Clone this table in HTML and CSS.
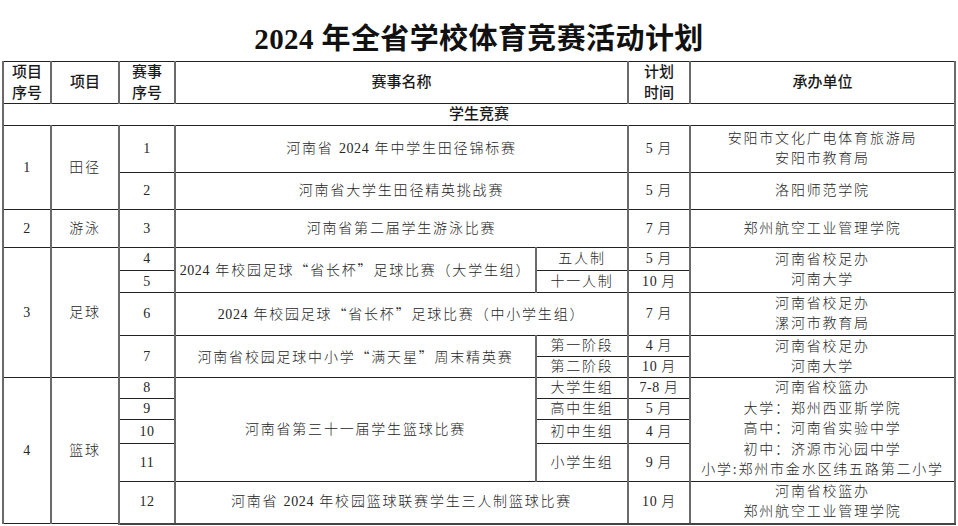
FILE: index.html
```html
<!DOCTYPE html>
<html lang="zh-CN">
<head>
<meta charset="utf-8">
<title>2024年全省学校体育竞赛活动计划</title>
<link rel="stylesheet" href="styles.css">
</head>
<body>
<h1 class="title">2024 年全省学校体育竞赛活动计划</h1>
<table class="plan">
  <colgroup>
    <col class="c1"><col class="c2"><col class="c3"><col class="c4a"><col class="c4b"><col class="c5"><col class="c6">
  </colgroup>
  <thead>
    <tr class="h-head">
      <th>项目<br>序号</th>
      <th>项目</th>
      <th>赛事<br>序号</th>
      <th colspan="2">赛事名称</th>
      <th>计划<br>时间</th>
      <th>承办单位</th>
    </tr>
  </thead>
  <tbody>
    <tr class="h-sec"><th colspan="7">学生竞赛</th></tr>
    <tr class="h-r1">
      <td rowspan="2" class="n">1</td><td rowspan="2">田径</td><td class="n">1</td>
      <td colspan="2">河南省 <span class="num">2024</span> 年中学生田径锦标赛</td><td class="n">5 月</td>
      <td>安阳市文化广电体育旅游局<br>安阳市教育局</td>
    </tr>
    <tr class="h-r2">
      <td class="n">2</td><td colspan="2">河南省大学生田径精英挑战赛</td><td class="n">5 月</td><td>洛阳师范学院</td>
    </tr>
    <tr class="h-r3">
      <td class="n">2</td><td>游泳</td><td class="n">3</td><td colspan="2">河南省第二届学生游泳比赛</td><td class="n">7 月</td><td>郑州航空工业管理学院</td>
    </tr>
    <tr class="h-r4">
      <td rowspan="5" class="n">3</td><td rowspan="5">足球</td><td class="n">4</td>
      <td rowspan="2"><span class="num">2024</span> 年校园足球<span class="q">“</span>省长杯<span class="q">”</span>足球比赛（大学生组）</td>
      <td>五人制</td><td class="n">5 月</td>
      <td rowspan="2">河南省校足办<br>河南大学</td>
    </tr>
    <tr class="h-r5"><td class="n">5</td><td>十一人制</td><td class="n">10 月</td></tr>
    <tr class="h-r6">
      <td class="n">6</td><td colspan="2"><span class="num">2024</span> 年校园足球<span class="q">“</span>省长杯<span class="q">”</span>足球比赛（中小学生组）</td><td class="n">7 月</td>
      <td>河南省校足办<br>漯河市教育局</td>
    </tr>
    <tr class="h-r7a">
      <td rowspan="2" class="n">7</td><td rowspan="2">河南省校园足球中小学<span class="q">“</span>满天星<span class="q">”</span>周末精英赛</td>
      <td>第一阶段</td><td class="n">4 月</td>
      <td rowspan="2">河南省校足办<br>河南大学</td>
    </tr>
    <tr class="h-r7b"><td>第二阶段</td><td class="n">10 月</td></tr>
    <tr class="h-r8">
      <td rowspan="5" class="n">4</td><td rowspan="5">篮球</td><td class="n">8</td>
      <td rowspan="4">河南省第三十一届学生篮球比赛</td>
      <td>大学生组</td><td class="n">7-8 月</td>
      <td rowspan="4" class="tight">河南省校篮办<br>大学：郑州西亚斯学院<br>高中：河南省实验中学<br>初中：济源市沁园中学<br>小学:郑州市金水区纬五路第二小学</td>
    </tr>
    <tr class="h-r9"><td class="n">9</td><td>高中生组</td><td class="n">5 月</td></tr>
    <tr class="h-r10"><td class="n">10</td><td>初中生组</td><td class="n">4 月</td></tr>
    <tr class="h-r11"><td class="n">11</td><td>小学生组</td><td class="n">9 月</td></tr>
    <tr class="h-r12">
      <td class="n">12</td><td colspan="2">河南省 <span class="num">2024</span> 年校园篮球联赛学生三人制篮球比赛</td><td class="n">10 月</td>
      <td>河南省校篮办<br>郑州航空工业管理学院</td>
    </tr>
  </tbody>
</table>
</body>
</html>
```
FILE: styles.css
```css
html, body {
  margin: 0;
  padding: 0;
  background: #ffffff;
}
body {
  width: 958px;
  height: 526px;
  overflow: hidden;
  color: #222222;
}
.title {
  margin: 0;
  height: 61px;
  display: flex;
  align-items: center;
  justify-content: center;
  padding-top: 10px;
  box-sizing: border-box;
  font-family: "Liberation Serif", "Noto Sans CJK SC", serif;
  font-weight: 700;
  font-size: 29px;
  color: #111111;
  letter-spacing: 0.4px;
}
.plan {
  margin-left: 2px;
  width: 952px;
  border-collapse: collapse;
  table-layout: fixed;
  font-family: "Liberation Serif", "Noto Sans CJK SC", serif;
  font-weight: 300;
  font-size: 14px;
  line-height: 20px;
  letter-spacing: 1.8px;
  color: #262626;
}
.c1 { width: 48px; }
.c2 { width: 68px; }
.c3 { width: 56px; }
.c4a { width: 361px; }
.c4b { width: 92px; }
.c5 { width: 62px; }
.c6 { width: 265px; }
.plan th, .plan td {
  padding: 0;
  text-align: center;
  vertical-align: middle;
  border-top: 1px solid #222222;
  border-bottom: 1px solid #222222;
  border-left: 2px solid #6a6a6a;
  border-right: 2px solid #6a6a6a;
  white-space: nowrap;
  overflow: hidden;
}
.plan th {
  font-family: "Liberation Sans", "Noto Sans CJK SC", sans-serif;
  font-weight: 500;
  font-size: 15px;
  letter-spacing: 0;
  line-height: 20.5px;
  color: #1a1a1a;
}
.plan td.n { letter-spacing: 0.6px; }
.num { letter-spacing: 0.6px; }
.q {
  font-family: "Noto Sans CJK SC", sans-serif;
  letter-spacing: 1.8px;
}
.plan tbody tr:last-child td { border-bottom: 2px solid #444444; }
.plan td.tight { line-height: 20.6px; }
.h-head { height: 41px; }
.h-sec { height: 22px; }
.h-r1 { height: 47px; }
.h-r2 { height: 37px; }
.h-r3 { height: 38px; }
.h-r4 { height: 23px; }
.h-r5 { height: 22px; }
.h-r6 { height: 43px; }
.h-r7a { height: 21px; }
.h-r7b { height: 21px; }
.h-r8 { height: 21px; }
.h-r9 { height: 21px; }
.h-r10 { height: 24px; }
.h-r11 { height: 38px; }
.h-r12 { height: 42px; }
```
